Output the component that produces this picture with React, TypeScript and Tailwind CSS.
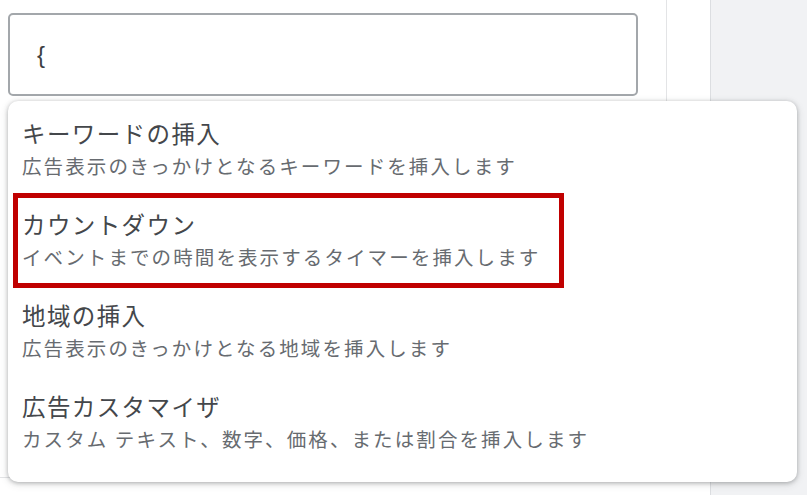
import React from "react";

const items = [
  { title: "キーワードの挿入", desc: "広告表示のきっかけとなるキーワードを挿入します" },
  { title: "カウントダウン", desc: "イベントまでの時間を表示するタイマーを挿入します" },
  { title: "地域の挿入", desc: "広告表示のきっかけとなる地域を挿入します" },
  { title: "広告カスタマイザ", desc: "カスタム テキスト、数字、価格、または割合を挿入します" },
];

export default function App() {
  return (
    <div
      className="relative w-[807px] h-[495px] bg-white overflow-hidden flex"
      style={{ fontFamily: '"Noto Sans CJK JP", "Noto Sans", sans-serif' }}
    >
      <div className="w-[710px] flex">
        <div className="w-[667px] h-[478px] border-r border-b border-[#e3e4e6] pl-2 pt-[13px]">
          <div className="w-[630px] h-[83px] border-2 border-[#a3a7ab] rounded-[5px] pl-[27px] flex items-center">
            <span className="text-[24px] text-[#3c4043] leading-none" style={{ fontFamily: '"Liberation Sans", sans-serif' }}>{"{"}</span>
          </div>
        </div>
      </div>
      <div className="flex-1 bg-[#f1f2f4] border-l border-[#dcdee1]" />

      <div className="absolute left-2 top-[101px] w-[789px] h-[381px] rounded-[10px] bg-white shadow-[0_1px_4px_rgba(60,64,67,0.35),0_2px_8px_rgba(60,64,67,0.15)] pt-[2px]">
        {items.map((it) => (
          <div key={it.title} className="h-[91px] pl-[14px] pt-[14px]">
            <div className="h-[32px] leading-[32px] text-[23.5px] tracking-[1.4px] text-[#44474b]">{it.title}</div>
            <div className="h-[34px] leading-[34px] text-[19.5px] tracking-[2.1px] text-[#676b70]">{it.desc}</div>
          </div>
        ))}
      </div>

      <div className="absolute left-[13px] top-[193px] w-[551px] h-[95px] border-[5px] border-[#c00000]" />
    </div>
  );
}
